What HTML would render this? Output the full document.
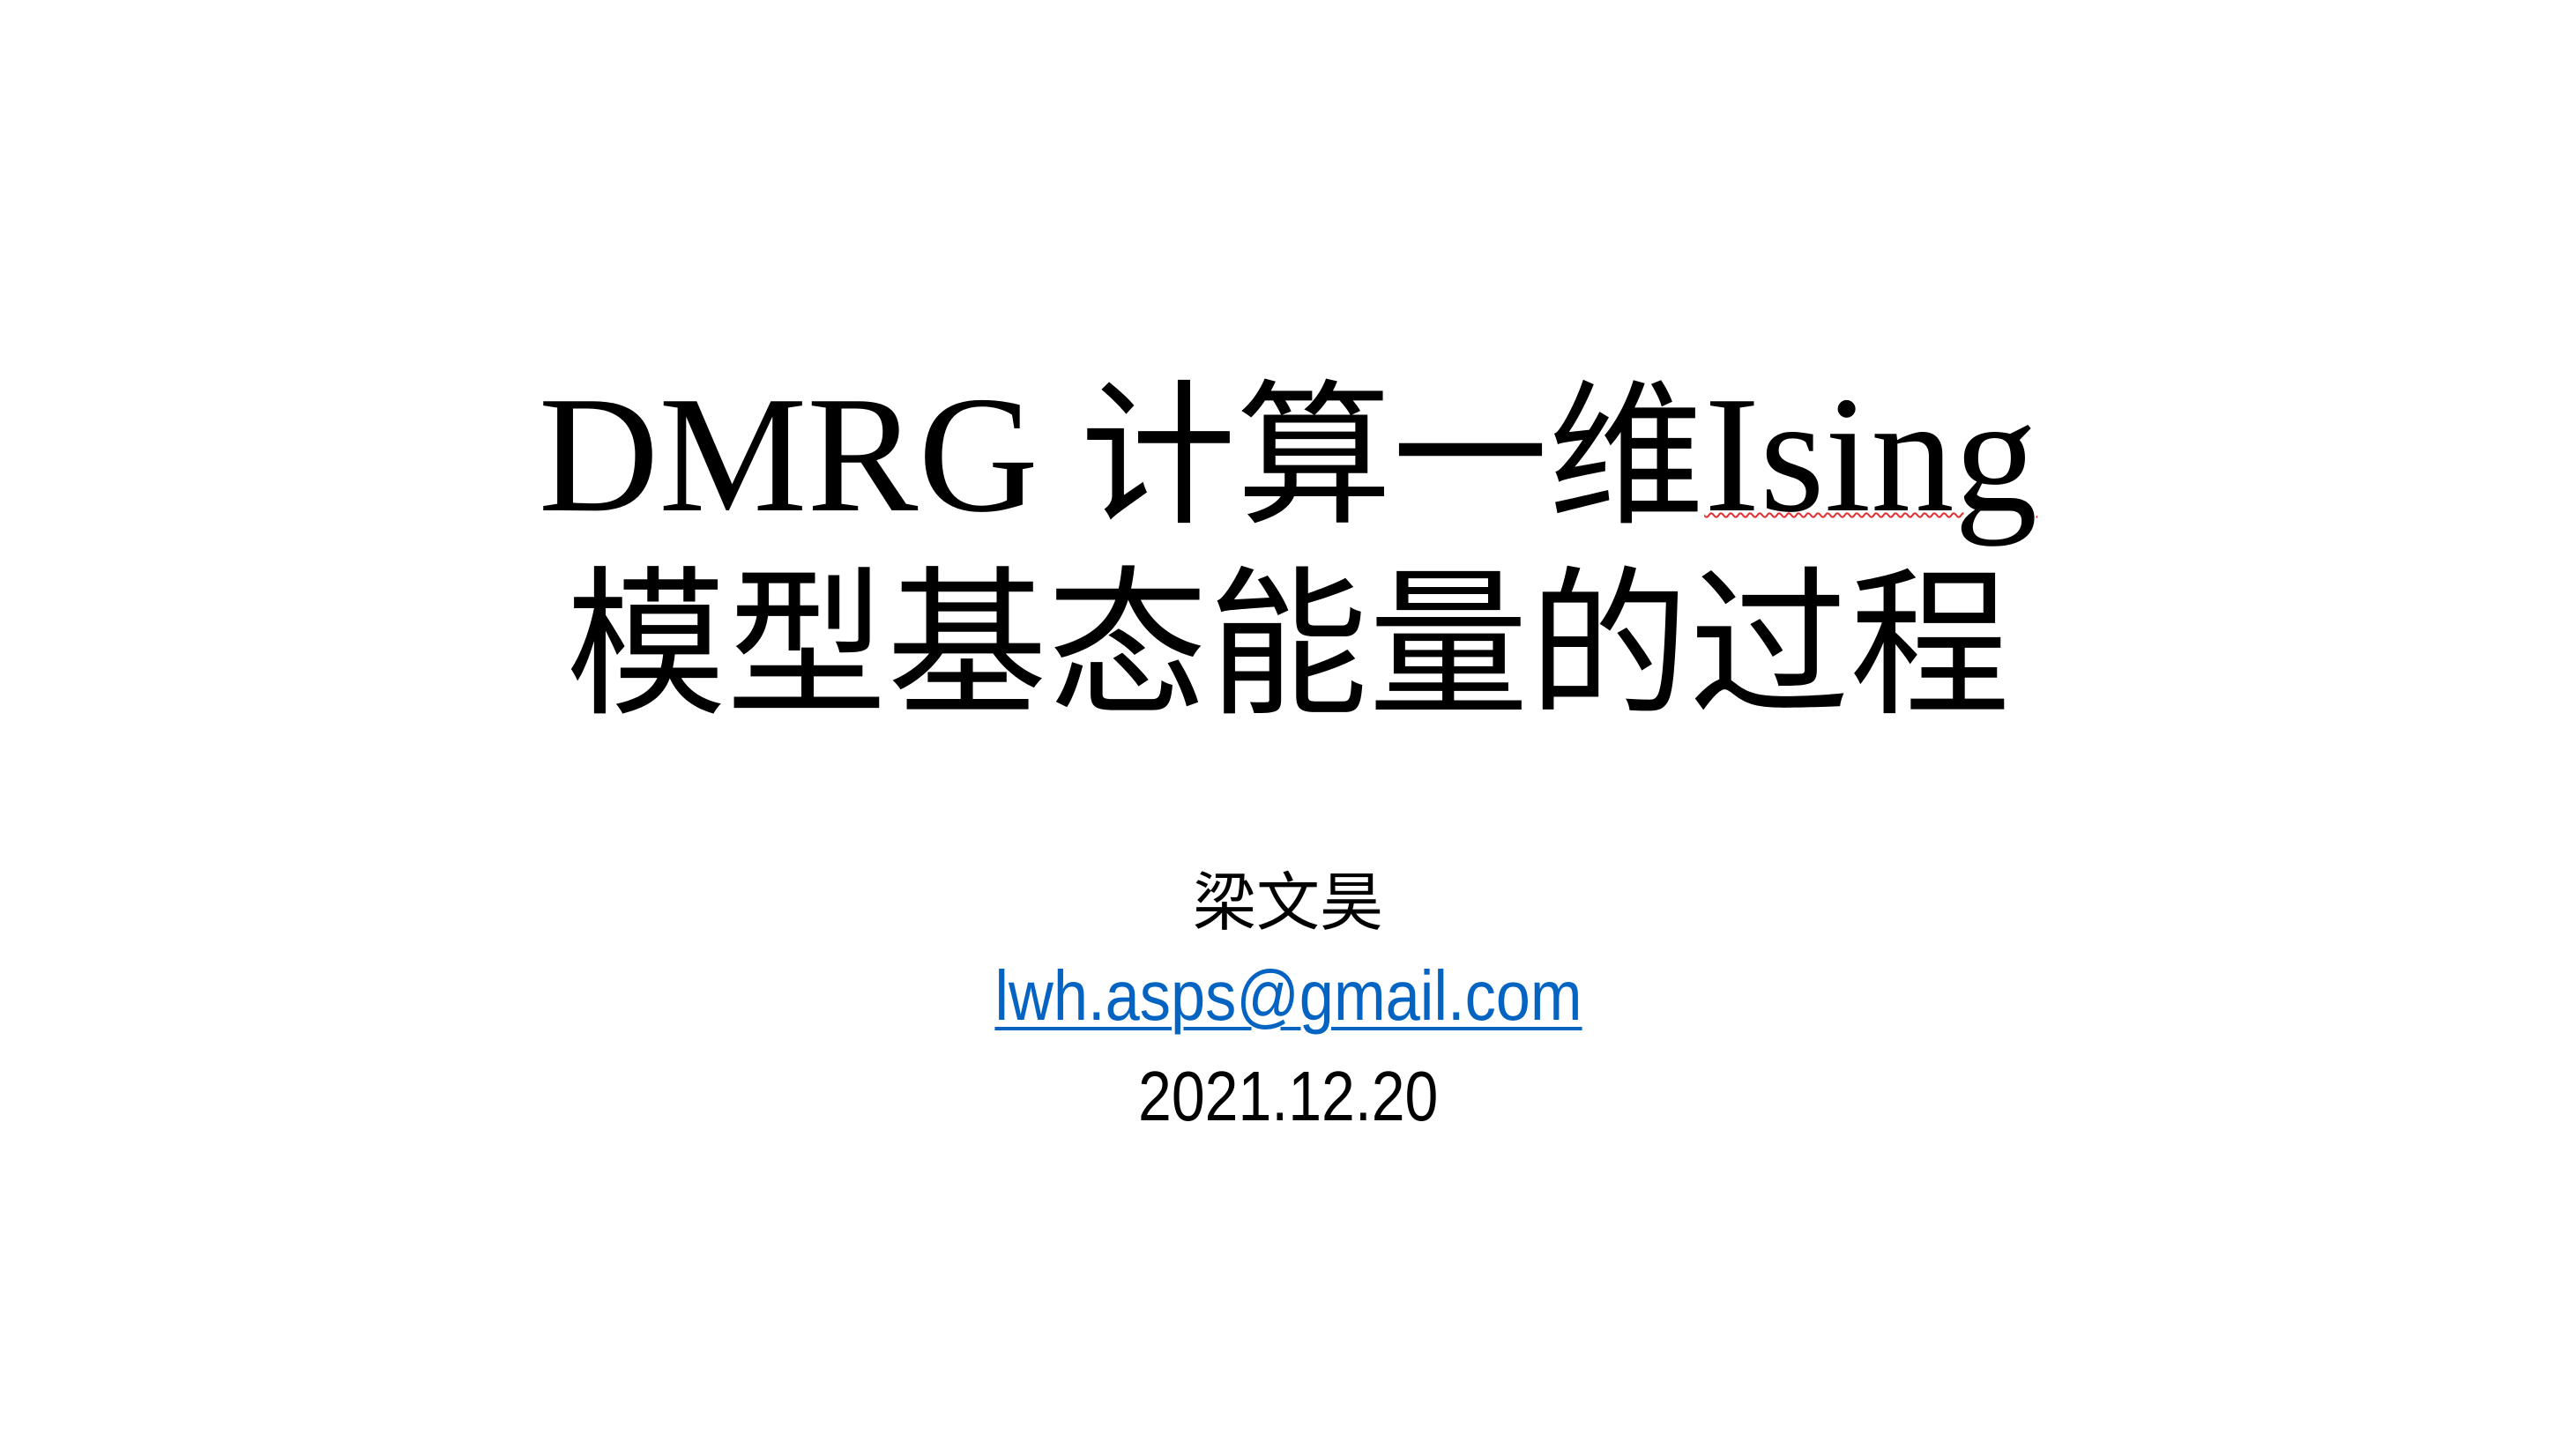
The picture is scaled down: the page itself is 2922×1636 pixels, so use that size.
<!DOCTYPE html>
<html><head><meta charset="utf-8"><style>
html,body{margin:0;padding:0;background:#fff;}
body{width:2922px;height:1636px;position:relative;overflow:hidden;}
.l{position:absolute;left:0;width:2922px;text-align:center;white-space:nowrap;color:#000;}
.t1{top:408px;font-size:189px;line-height:189px;font-family:"Liberation Serif","Noto Sans CJK SC",serif;}
.t1 .c{font-family:"Noto Sans CJK SC",sans-serif;font-size:177px;}
.t1 .i{text-decoration:underline wavy #e03030;text-decoration-thickness:2px;text-underline-offset:2px;}
.t2{top:626px;font-size:182px;line-height:182px;font-family:"Noto Sans CJK SC",sans-serif;}
.n{top:982px;font-size:72px;line-height:72px;font-family:"Noto Sans CJK SC",sans-serif;}
.e{top:1090px;font-size:80px;line-height:80px;font-family:"Liberation Sans",sans-serif;color:#0563C1;}
.e span{display:inline-block;transform:scaleX(0.88);text-decoration:underline;text-decoration-thickness:4px;text-underline-offset:8px;}
.d{top:1204px;font-size:80px;line-height:80px;font-family:"Liberation Sans",sans-serif;}
.d span{display:inline-block;transform:scaleX(0.85);}
</style></head><body>
<div class="l t1">DMRG <span class="c">计算一维</span><span class="i">Ising</span></div>
<div class="l t2">模型基态能量的过程</div>
<div class="l n">梁文昊</div>
<div class="l e"><span>lwh.asps@gmail.com</span></div>
<div class="l d"><span>2021.12.20</span></div>
</body></html>
